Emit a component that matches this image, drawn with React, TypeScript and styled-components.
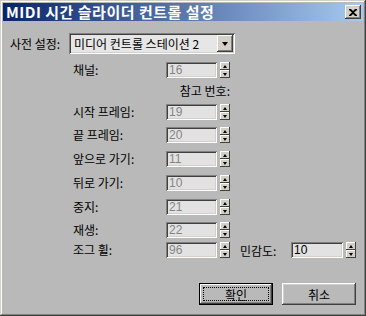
import React from 'react';
import styled, { createGlobalStyle } from 'styled-components';

const GlobalStyle = createGlobalStyle`
  html, body {
    margin: 0;
    padding: 0;
    background: #b9b9b9;
  }
  * {
    box-sizing: border-box;
  }
`;

const KR = `"Noto Sans CJK KR", "Liberation Sans", sans-serif`;

const Window = styled.div`
  width: 366px;
  height: 316px;
  padding: 3px;
  background: #b9b9b9;
  box-shadow: inset -1px -1px #404040, inset 1px 1px #d4d0c8,
    inset -2px -2px #808080, inset 2px 2px #ffffff;
  font-family: ${KR};
  font-size: 12px;
  color: #000;
  display: flex;
  flex-direction: column;
`;

const TitleBar = styled.div`
  height: 18px;
  background: linear-gradient(to right, #0a246a, #a6caf0);
  display: flex;
  align-items: center;
  justify-content: space-between;
  padding: 0 2px 0 3px;
`;

const Title = styled.span`
  color: #fff;
  font-weight: bold;
  font-size: 15px;
  line-height: 18px;
  letter-spacing: 0.5px;
  white-space: nowrap;
`;

const CloseButton = styled.div`
  width: 16px;
  height: 14px;
  background: #d4d0c8;
  box-shadow: inset -1px -1px #404040, inset 1px 1px #ffffff,
    inset -2px -2px #808080;
  display: flex;
  align-items: center;
  justify-content: center;
`;

const Content = styled.div`
  flex: 1;
  position: relative;
  display: flex;
  flex-direction: column;
  padding: 12px 0 0 7px;
`;

const PresetRow = styled.div`
  display: flex;
  align-items: center;
  height: 21px;
`;

const Label = styled.span<{ $w?: number }>`
  width: ${(p) => (p.$w ? `${p.$w}px` : 'auto')};
  white-space: nowrap;
  line-height: 16px;
`;

const Combo = styled.div`
  margin-left: 3px;
  width: 166px;
  height: 21px;
  background: #e6e6e6;
  box-shadow: inset 1px 1px #808080, inset -1px -1px #ffffff,
    inset 2px 2px #404040, inset -2px -2px #d4d0c8;
  display: flex;
  align-items: center;
  padding: 0 2px 0 5px;
`;

const ComboText = styled.span`
  flex: 1;
  white-space: nowrap;
`;

const DropButton = styled.div`
  width: 16px;
  height: 17px;
  background: #d4d0c8;
  box-shadow: inset -1px -1px #404040, inset 1px 1px #ffffff,
    inset -2px -2px #808080;
  display: flex;
  align-items: center;
  justify-content: center;
`;

const Form = styled.div`
  display: flex;
  flex-direction: column;
  padding-left: 63px;
`;

const Row = styled.div<{ $gap: number }>`
  display: flex;
  align-items: center;
  height: 16px;
  margin-top: ${(p) => p.$gap}px;
`;

const RefLabel = styled.div<{ $gap: number }>`
  width: 157px;
  text-align: right;
  line-height: 14px;
  margin-top: ${(p) => p.$gap}px;
`;

const Edit = styled.div<{ $disabled?: boolean; $w?: number }>`
  width: ${(p) => p.$w ?? 51}px;
  height: 16px;
  background: #e2e2e2;
  box-shadow: inset 1px 1px #808080, inset -1px -1px #ffffff,
    inset 2px 2px #404040, inset -2px -2px #d4d0c8;
  padding: 0 3px;
  font-family: "Liberation Sans", Arial, sans-serif;
  font-size: 12px;
  line-height: 17px;
  color: ${(p) => (p.$disabled ? '#858585' : '#000')};
`;

const Spinner = styled.div`
  margin-left: 3px;
  width: 10px;
  height: 16px;
  display: flex;
  flex-direction: column;
`;

const SpinHalf = styled.div`
  flex: 1;
  background: #d4d0c8;
  box-shadow: inset -1px -1px #404040, inset 1px 1px #ffffff;
  display: flex;
  align-items: center;
  justify-content: center;
`;

const Arrow = styled.div<{ $up?: boolean; $size?: number }>`
  width: 0;
  height: 0;
  border-left: ${(p) => (p.$size ?? 5) / 2}px solid transparent;
  border-right: ${(p) => (p.$size ?? 5) / 2}px solid transparent;
  ${(p) =>
    p.$up
      ? `border-bottom: ${Math.ceil((p.$size ?? 5) / 2)}px solid #000;`
      : `border-top: ${Math.ceil((p.$size ?? 5) / 2)}px solid #000;`}
`;

const SideLabel = styled.span`
  margin-left: 10px;
  width: 51px;
  white-space: nowrap;
`;

const ButtonRow = styled.div`
  margin-top: auto;
  margin-bottom: 8px;
  display: flex;
  justify-content: flex-end;
  gap: 9px;
  padding-right: 7px;
`;

const Button = styled.div<{ $default?: boolean }>`
  position: relative;
  width: 74px;
  height: 22px;
  background: #b9b9b9;
  display: flex;
  align-items: center;
  justify-content: center;
  box-shadow: ${(p) =>
    p.$default
      ? 'inset 0 0 0 1px #000, inset -2px -2px #404040, inset 2px 2px #ffffff, inset -3px -3px #808080'
      : 'inset -1px -1px #404040, inset 1px 1px #ffffff, inset -2px -2px #808080, inset 2px 2px #d4d0c8'};
`;

const Focus = styled.div`
  position: absolute;
  inset: 4px;
  border: 1px dotted #000;
`;

const Spin = () => (
  <Spinner>
    <SpinHalf>
      <Arrow $up />
    </SpinHalf>
    <SpinHalf>
      <Arrow />
    </SpinHalf>
  </Spinner>
);

const rows: { label: string; value: string; gap: number }[] = [
  { label: '시작 프레임:', value: '19', gap: 6 },
  { label: '끝 프레임:', value: '20', gap: 7 },
  { label: '앞으로 가기:', value: '11', gap: 8 },
  { label: '뒤로 가기:', value: '10', gap: 8 },
  { label: '중지:', value: '21', gap: 8 },
  { label: '재생:', value: '22', gap: 7 },
];

export default function App() {
  return (
    <>
      <GlobalStyle />
      <Window>
        <TitleBar>
          <Title>MIDI 시간 슬라이더 컨트롤 설정</Title>
          <CloseButton>
            <svg width="8" height="7" viewBox="0 0 8 7">
              <path
                d="M0 0h2l2 2 2-2h2v1L5 3.5 8 6v1H6L4 5 2 7H0V6l3-2.5L0 1z"
                fill="#000"
              />
            </svg>
          </CloseButton>
        </TitleBar>
        <Content>
          <PresetRow>
            <Label $w={56}>사전 설정:</Label>
            <Combo>
              <ComboText>미디어 컨트롤 스테이션 2</ComboText>
              <DropButton>
                <Arrow $size={7} />
              </DropButton>
            </Combo>
          </PresetRow>
          <Form>
            <Row $gap={8}>
              <Label $w={93}>채널:</Label>
              <Edit $disabled>16</Edit>
              <Spin />
            </Row>
            <RefLabel $gap={6}>참고 번호:</RefLabel>
            {rows.map((r) => (
              <Row key={r.label} $gap={r.gap}>
                <Label $w={93}>{r.label}</Label>
                <Edit $disabled>{r.value}</Edit>
                <Spin />
              </Row>
            ))}
            <Row $gap={4}>
              <Label $w={93}>조그 휠:</Label>
              <Edit $disabled>96</Edit>
              <Spin />
              <SideLabel>민감도:</SideLabel>
              <Edit $w={52}>10</Edit>
              <Spin />
            </Row>
          </Form>
          <ButtonRow>
            <Button $default>
              <Focus />
              확인
            </Button>
            <Button>취소</Button>
          </ButtonRow>
        </Content>
      </Window>
    </>
  );
}
